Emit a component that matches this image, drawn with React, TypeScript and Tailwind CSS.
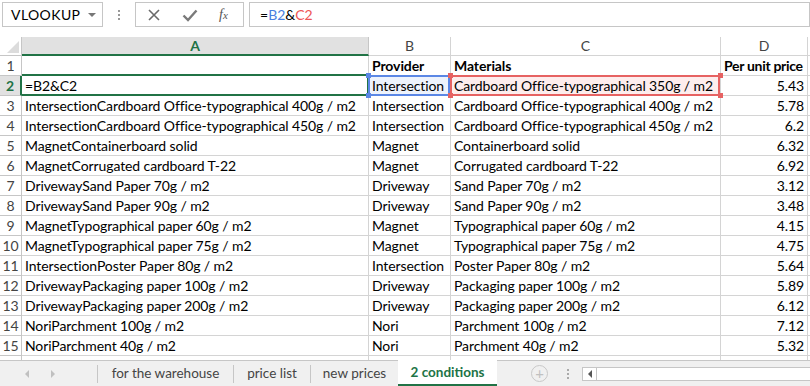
import { useState } from "react";

const rows = [
  ["IntersectionCardboard Office-typographical 400g / m2", "Intersection", "Cardboard Office-typographical 400g / m2", "5.78"],
  ["IntersectionCardboard Office-typographical 450g / m2", "Intersection", "Cardboard Office-typographical 450g / m2", "6.2"],
  ["MagnetContainerboard solid", "Magnet", "Containerboard solid", "6.32"],
  ["MagnetCorrugated cardboard T-22", "Magnet", "Corrugated cardboard T-22", "6.92"],
  ["DrivewaySand Paper 70g / m2", "Driveway", "Sand Paper 70g / m2", "3.12"],
  ["DrivewaySand Paper 90g / m2", "Driveway", "Sand Paper 90g / m2", "3.48"],
  ["MagnetTypographical paper 60g / m2", "Magnet", "Typographical paper 60g / m2", "4.15"],
  ["MagnetTypographical paper 75g / m2", "Magnet", "Typographical paper 75g / m2", "4.75"],
  ["IntersectionPoster Paper 80g / m2", "Intersection", "Poster Paper 80g / m2", "5.64"],
  ["DrivewayPackaging paper 100g / m2", "Driveway", "Packaging paper 100g / m2", "5.89"],
  ["DrivewayPackaging paper 200g / m2", "Driveway", "Packaging paper 200g / m2", "6.12"],
  ["NoriParchment 100g / m2", "Nori", "Parchment 100g / m2", "7.12"],
  ["NoriParchment 40g / m2", "Nori", "Parchment 40g / m2", "5.32"],
];

const cell = "h-[20px] shrink-0 border-r border-b border-[#d4d4d4] px-[3px] leading-[19px] whitespace-nowrap overflow-hidden";
const rowHead = "h-[20px] w-[22px] shrink-0 border-r border-b border-[#c6c6c6] text-center leading-[19px] text-[#444] text-[14px] tracking-normal";

function Corners({ color }: { color: string }) {
  return (
    <>
      <span className={"absolute -left-[3px] -top-[3px] w-[5px] h-[5px] " + color}></span>
      <span className={"absolute -right-[3px] -top-[3px] w-[5px] h-[5px] " + color}></span>
      <span className={"absolute -left-[3px] -bottom-[3px] w-[5px] h-[5px] " + color}></span>
      <span className={"absolute -right-[3px] -bottom-[3px] w-[5px] h-[5px] " + color}></span>
    </>
  );
}

export default function App() {
  const [active] = useState("2 conditions");

  return (
    <div className="w-[810px] h-[386px] overflow-hidden bg-white text-black flex flex-col" style={{ fontFamily: "Lato, 'Open Sans', sans-serif" }}>
      {/* formula bar */}
      <div className="h-[37px] shrink-0 flex items-start pt-[2px] pl-[2px] text-[14px]">
        <div className="w-[101px] h-[25px] border border-[#c6c6c6] flex items-center justify-between pl-[8px] pr-[6px]">
          <span className="tracking-[0.4px]">VLOOKUP</span>
          <span className="w-0 h-0 border-l-[4px] border-r-[4px] border-t-[4px] border-l-transparent border-r-transparent border-t-[#777]"></span>
        </div>
        <div className="w-[32px] h-[25px] flex flex-col items-center justify-center gap-[2px]">
          <span className="w-[2px] h-[2px] bg-[#999]"></span>
          <span className="w-[2px] h-[2px] bg-[#999]"></span>
          <span className="w-[2px] h-[2px] bg-[#999]"></span>
        </div>
        <div className="w-[109px] h-[25px] border border-[#c6c6c6] flex items-center">
          <svg width="14" height="14" viewBox="0 0 14 14" className="ml-[11px]">
            <path d="M2 2 L12 12 M12 2 L2 12" stroke="#6a6a6a" strokeWidth="1.6" fill="none" />
          </svg>
          <svg width="16" height="14" viewBox="0 0 16 14" className="ml-[21px]">
            <path d="M1.5 7.5 L6 12 L14.5 2.5" stroke="#7a7a7a" strokeWidth="2.4" fill="none" />
          </svg>
          <span className="ml-[21px] text-[14px] italic text-[#555]" style={{ fontFamily: "'Liberation Serif', serif" }}>
            f<span className="text-[11px]">x</span>
          </span>
        </div>
        <div className="ml-[5px] flex-1 h-[25px] border border-[#c6c6c6] flex items-center pl-[10px] text-[14px]">
          <span>=</span>
          <span className="text-[#4a7fe0]">B2</span>
          <span>&amp;</span>
          <span className="text-[#ee5555]">C2</span>
        </div>
      </div>

      {/* grid */}
      <div className="flex-1 overflow-hidden text-[14px] tracking-[-0.1px]">
        {/* column headers */}
        <div className="flex h-[19px] text-[14px] text-[#444] tracking-normal">
          <div className="w-[22px] shrink-0 border-r border-b border-[#c6c6c6] relative overflow-hidden">
            <svg width="12" height="12" viewBox="0 0 12 12" className="absolute right-[2px] bottom-[2px]">
              <path d="M12 0 L12 12 L0 12 Z" fill="#dcdcdc" />
            </svg>
          </div>
          <div className="w-[347px] shrink-0 bg-[#e1e1e1] border-r border-[#c6c6c6] border-b-2 border-b-[#217346] text-center font-bold text-[#217346] leading-[18px]">A</div>
          <div className="w-[82px] shrink-0 border-r border-b border-[#d4d4d4] text-center leading-[18px]">B</div>
          <div className="w-[270px] shrink-0 border-r border-b border-[#d4d4d4] text-center leading-[18px]">C</div>
          <div className="w-[87px] shrink-0 border-r border-b border-[#d4d4d4] text-center leading-[18px]">D</div>
          <div className="flex-1 border-b border-[#d4d4d4]"></div>
        </div>

        {/* row 1 */}
        <div className="flex">
          <div className={rowHead}>1</div>
          <div className={cell + " w-[347px] border-b-[#217346] border-b-2"}></div>
          <div className={cell + " w-[82px] font-bold"}>Provider</div>
          <div className={cell + " w-[270px] font-bold"}>Materials</div>
          <div className={cell + " w-[87px] font-bold px-[2px] tracking-[-0.3px]"}>Per unit price</div>
          <div className={cell + " flex-1 border-r-0 px-0"}></div>
        </div>

        {/* row 2 */}
        <div className="flex">
          <div className={rowHead + " bg-[#e1e1e1] font-bold text-[#217346] border-r-2 border-r-[#217346]"}>2</div>
          <div className={cell + " w-[347px] relative border-r-2 border-r-[#217346] border-b-2 border-b-[#217346] leading-[18px]"}>=B2&amp;C2</div>
          <div className={cell + " w-[82px] relative overflow-visible bg-[#eef3fc]"}>
            <span className="absolute -left-[1px] -top-[1px] right-0 -bottom-[1px] border-2 border-[#5b87e5] pointer-events-none"></span>
            <Corners color="bg-[#5b87e5]" />
            Intersection
          </div>
          <div className={cell + " w-[270px] relative overflow-visible bg-[#fdeded]"}>
            <span className="absolute -left-[1px] -top-[1px] right-0 -bottom-[1px] border-2 border-[#e66262] pointer-events-none"></span>
            <Corners color="bg-[#e66262]" />
            Cardboard Office-typographical 350g / m2
          </div>
          <div className={cell + " w-[87px] text-right"}>5.43</div>
          <div className={cell + " flex-1 border-r-0 px-0"}></div>
        </div>

        {rows.map((r, i) => (
          <div className="flex" key={i}>
            <div className={rowHead}>{i + 3}</div>
            <div className={cell + " w-[347px]"}>{r[0]}</div>
            <div className={cell + " w-[82px]"}>{r[1]}</div>
            <div className={cell + " w-[270px]"}>{r[2]}</div>
            <div className={cell + " w-[87px] text-right"}>{r[3]}</div>
            <div className={cell + " flex-1 border-r-0 px-0"}></div>
          </div>
        ))}

        <div className="flex">
          <div className={rowHead}></div>
          <div className={cell + " w-[347px]"}></div>
          <div className={cell + " w-[82px]"}></div>
          <div className={cell + " w-[270px]"}></div>
          <div className={cell + " w-[87px]"}></div>
        </div>
      </div>

      {/* sheet tabs */}
      <div className="h-[26px] shrink-0 flex bg-[#f0f0f0] text-[13.5px] text-[#444]">
        <div className="w-[97px] shrink-0 border-t border-[#c6c6c6] flex items-center">
          <span className="ml-[25px] w-0 h-0 border-t-[4px] border-b-[4px] border-r-[4px] border-t-transparent border-b-transparent border-r-[#c0c0c0]"></span>
          <span className="ml-[22px] w-0 h-0 border-t-[4px] border-b-[4px] border-l-[4px] border-t-transparent border-b-transparent border-l-[#c0c0c0]"></span>
        </div>
        {[["for the warehouse", "w-[136px]"], ["price list", "w-[77px]"], ["new prices", "w-[88px]"]].map(([t, w]) => (
          <div key={t} className={"shrink-0 border-t border-[#c6c6c6] flex items-center " + w}>
            <span className="w-px h-[18px] bg-[#c6c6c6]"></span>
            <span className="flex-1 text-center">{t}</span>
          </div>
        ))}
        <div className="w-[99px] shrink-0 bg-white border-b-2 border-[#217346] flex items-center justify-center font-bold text-[#217346]">
          {active}
        </div>
        <div className="flex-1 border-t border-[#c6c6c6] flex items-center">
          <span className="ml-[34px] w-[17px] h-[17px] rounded-full border border-[#c8c8c8] flex items-center justify-center text-[#c0c0c0] text-[15px] leading-none">+</span>
          <span className="ml-[19px] flex flex-col gap-[2px]">
            <span className="w-[2px] h-[2px] bg-[#aaa]"></span>
            <span className="w-[2px] h-[2px] bg-[#aaa]"></span>
            <span className="w-[2px] h-[2px] bg-[#aaa]"></span>
          </span>
          <div className="ml-[13px] flex-1 h-[14px] bg-white border border-r-0 border-[#c6c6c6] flex items-center">
            <span className="w-[14px] h-full border-r border-[#c6c6c6] flex items-center justify-center">
              <span className="w-0 h-0 border-t-[4px] border-b-[4px] border-r-[4px] border-t-transparent border-b-transparent border-r-[#555]"></span>
            </span>
          </div>
        </div>
      </div>
    </div>
  );
}
